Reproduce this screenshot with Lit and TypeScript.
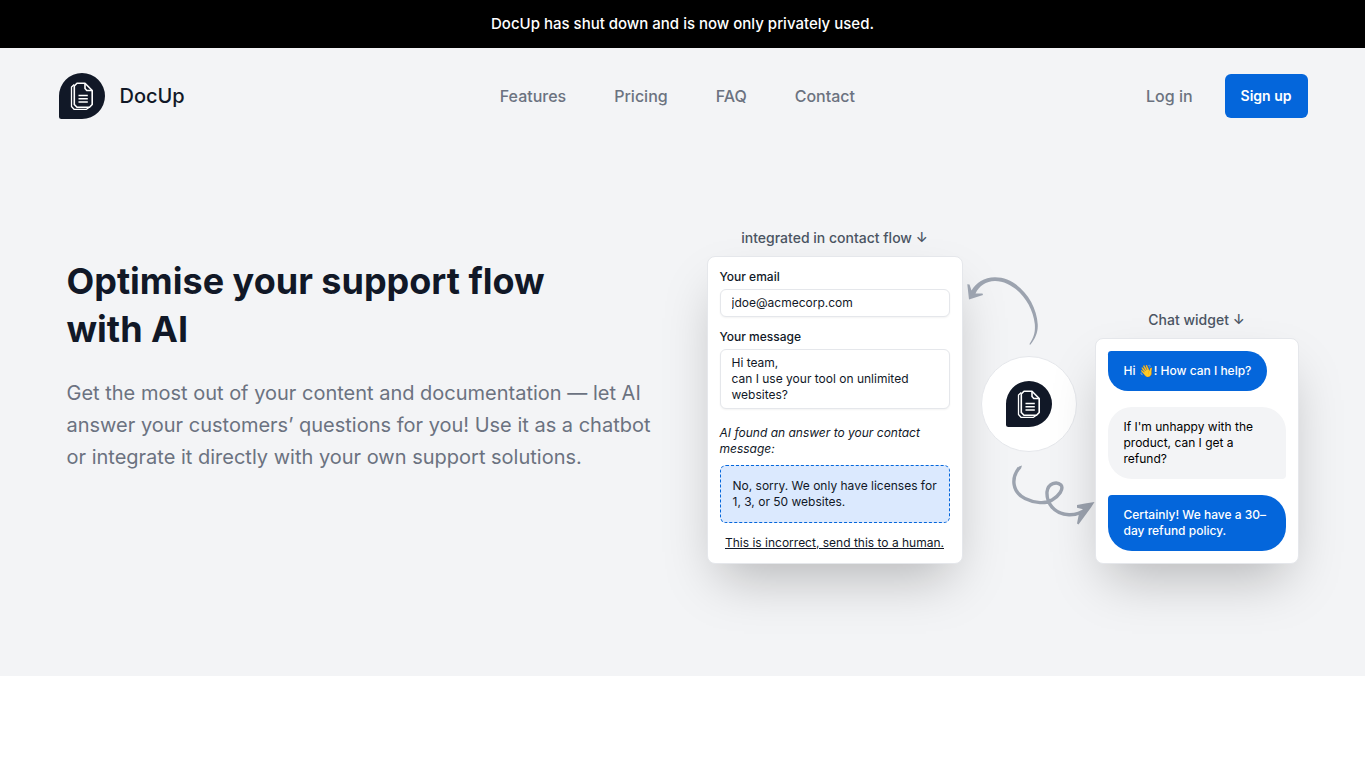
import { LitElement, html, css, svg } from "lit";
import { customElement } from "lit/decorators.js";

const logoMark = html`
  <svg class="mark" viewBox="0 0 48 48" aria-hidden="true">
    <path fill="#111827" d="M24 1A23 23 0 0 1 24 47H3.5A2.5 2.5 0 0 1 1 44.5V24A23 23 0 0 1 24 1Z" />
    ${svg`
      <g fill="none" stroke="#fff" stroke-width="1.6" stroke-linejoin="round" stroke-linecap="butt">
        <path d="M19 11.3H27L34.200 18.500V32.500L31.500 35.300H19L16.300 32.500V14Z" />
        <path d="M27 11.300V16.500L28.800 18.500H34.200" />
        <path stroke-width="1.300" d="M16.300 12.500L13.500 15V34.500L16 37.300H28.500L31.300 35.300" />
        <path stroke-width="1.400" d="M20.500 23.500H29.800M20.500 26.700H29.800M20.500 30H29.800" />
      </g>`}
  </svg>
`;

@customElement("app-root")
export class AppRoot extends LitElement {
  static styles = css`
    :host {
      display: block;
      min-height: 100vh;
      background: #fff;
      color: #111827;
      font-family: "Inter", "Liberation Sans", sans-serif;
    }
    *, *::before, *::after { box-sizing: border-box; }
    h1, p { margin: 0; }
    a { color: inherit; text-decoration: none; }
    .banner {
      display: flex;
      justify-content: center;
      padding: 12px 16px;
      background: #000;
      color: #fff;
      font-size: 15px;
      line-height: 24px;
      font-weight: 500;
    }
    .top { background: #f3f4f6; }
    .header {
      display: flex;
      align-items: center;
      justify-content: space-between;
      max-width: 1280px;
      margin: 0 auto;
      padding: 24px 15px;
    }
    .brand {
      display: flex;
      align-items: center;
      gap: 14px;
      font-size: 20px;
      line-height: 32px;
      font-weight: 500;
    }
    .mark { display: block; width: 48px; height: 48px; }
    .links, .account {
      display: flex;
      align-items: center;
      color: #6b7280;
      font-size: 16px;
      line-height: 24px;
      font-weight: 500;
    }
    .links { gap: 48px; padding-left: 24px; }
    .account { gap: 32px; }
    .signup {
      padding: 12px 16px;
      border: 0;
      border-radius: 6px;
      background: #0466db;
      color: #fff;
      font: inherit;
      font-size: 14px;
      line-height: 20px;
      font-weight: 600;
    }
    .hero {
      display: grid;
      grid-template-columns: 1fr 1fr;
      align-items: center;
      gap: 48px;
      max-width: 1280px;
      margin: 0 auto;
      padding: 84px 24px 112px;
    }
    .intro {
      display: flex;
      flex-direction: column;
      gap: 24px;
      padding-bottom: 62px;
    }
    h1 {
      max-width: 520px;
      font-size: 36px;
      line-height: 48px;
      font-weight: 700;
    }
    .lead {
      color: #6b7280;
      font-size: 20px;
      line-height: 32px;
    }
    .demo {
      display: flex;
      align-items: flex-end;
    }
    .column {
      display: flex;
      flex-direction: column;
      gap: 8px;
    }
    .flow { flex: 0 0 256px; }
    .chat { flex: 0 0 204px; }
    .caption {
      color: #4b5563;
      font-size: 14px;
      line-height: 20px;
      font-weight: 500;
      text-align: center;
    }
    .card {
      display: flex;
      flex-direction: column;
      padding: 12px;
      border: 1px solid #e5e7eb;
      border-radius: 8px;
      background: #fff;
      box-shadow: 0 25px 50px -12px rgba(0, 0, 0, 0.25);
      font-size: 12px;
      line-height: 16px;
    }
    .form { gap: 12px; }
    .field { display: flex; flex-direction: column; gap: 4px; }
    .field label { font-weight: 500; }
    .field input, .field textarea {
      display: block;
      width: 100%;
      margin: 0;
      padding: 5px 11px;
      border: 1px solid #e5e7eb;
      border-radius: 6px;
      background: #fff;
      box-shadow: 0 1px 2px rgba(0, 0, 0, 0.05);
      color: inherit;
      font: inherit;
      resize: none;
      overflow: hidden;
    }
    .result { display: flex; flex-direction: column; gap: 8px; padding-top: 4px; }
    .found { font-style: italic; }
    .answer {
      padding: 12px 6px 12px 12px;
      border: 1px dashed #0466db;
      border-radius: 6px;
      background: #dbe9fe;
    }
    .human { text-align: center; }
    .human a { text-decoration: underline; }
    .middle {
      display: flex;
      flex: 1;
      flex-direction: column;
      gap: 8px;
      padding-bottom: 36px;
    }
    .arrow { display: block; fill: #9ca3af; }
    .arrow-left { width: 78px; height: 74px; }
    .arrow-right { width: 84px; height: 68px; align-self: flex-end; }
    .disc {
      display: flex;
      align-items: center;
      justify-content: center;
      align-self: center;
      width: 96px;
      height: 96px;
      border: 1px solid #e5e7eb;
      border-radius: 50%;
      background: #fff;
    }
    .messages { gap: 16px; }
    .bubble {
      padding: 12px 16px;
      font-weight: 500;
    }
    .bot {
      align-self: flex-start;
      border-radius: 4px 24px 24px 24px;
      background: #0466db;
      color: #fff;
    }
    .visitor {
      border-radius: 24px 24px 4px 24px;
      background: #f3f4f6;
      color: #000;
      font-weight: 400;
    }
  `;

  render() {
    return html`
      <div class="banner">DocUp has shut down and is now only privately used.</div>
      <div class="top">
        <header class="header">
          <a class="brand" href="#">${logoMark}<span>DocUp</span></a>
          <nav class="links">
            <a href="#features">Features</a>
            <a href="#pricing">Pricing</a>
            <a href="#faq">FAQ</a>
            <a href="#contact">Contact</a>
          </nav>
          <div class="account">
            <a href="#login">Log in</a>
            <button class="signup" type="button">Sign up</button>
          </div>
        </header>
        <main class="hero">
          <div class="intro">
            <h1>Optimise your support flow with AI</h1>
            <p class="lead">Get the most out of your content and documentation — let AI answer your customers’ questions for you! Use it as a chatbot or integrate it directly with your own support solutions.</p>
          </div>
          <div class="demo">
            <section class="column flow">
              <p class="caption">integrated in contact flow ↓</p>
              <div class="card form">
                <div class="field">
                  <label for="email">Your email</label>
                  <input id="email" type="email" value="jdoe@acmecorp.com" />
                </div>
                <div class="field">
                  <label for="message">Your message</label>
                  <textarea id="message" rows="3" .value=${"Hi team,\ncan I use your tool on unlimited websites?"}></textarea>
                </div>
                <div class="result">
                  <p class="found">AI found an answer to your contact message:</p>
                  <p class="answer">No, sorry. We only have licenses for 1, 3, or 50 websites.</p>
                </div>
                <p class="human"><a href="#human">This is incorrect, send this to a human.</a></p>
              </div>
            </section>
            <div class="middle">
              <svg class="arrow arrow-left" viewBox="0 0 78 74" aria-hidden="true">
                <path d="M67 71C73 64 75.200 57 74.700 50C73.500 28 55 3.300 32 3.300C21 3.300 13 9 8.500 16.500L6.500 10.500L4.300 10.300L6 25.500L20 21L19.500 19.500L12.500 19.500C16 12 23 7 32 7C51 7 69.500 28 71.800 50C72.400 58 71 63 66.500 70Z" />
              </svg>
              <div class="disc">${logoMark}</div>
              <svg class="arrow arrow-right" viewBox="0 -4 84 68" aria-hidden="true">
                <path fill="none" stroke="#9ca3af" stroke-width="3.400" d="M8 4C0 14 1 28 14 34.500C24 39.500 35 40 41 36C48 32 53 25 50 21C46 17 37 19 36 28C35.500 38 42 50 58 50.800C66 51 73 48 78 42" />
                <path d="M11 1.500L10 4.500L8.800 5.800L6 4.500L8 2.500Z" />
                <path d="M83.500 38L80 43.500L67.500 60.500L66 59.500L68 49.500L73 45.500L66 43.800L66 41L74 39.500Z" />
              </svg>
            </div>
            <section class="column chat">
              <p class="caption">Chat widget ↓</p>
              <div class="card messages">
                <p class="bubble bot">Hi 👋! How can I help?</p>
                <p class="bubble visitor">If I'm unhappy with the product, can I get a refund?</p>
                <p class="bubble bot">Certainly! We have a 30–day refund policy.</p>
              </div>
            </section>
          </div>
        </main>
      </div>
    `;
  }
}
